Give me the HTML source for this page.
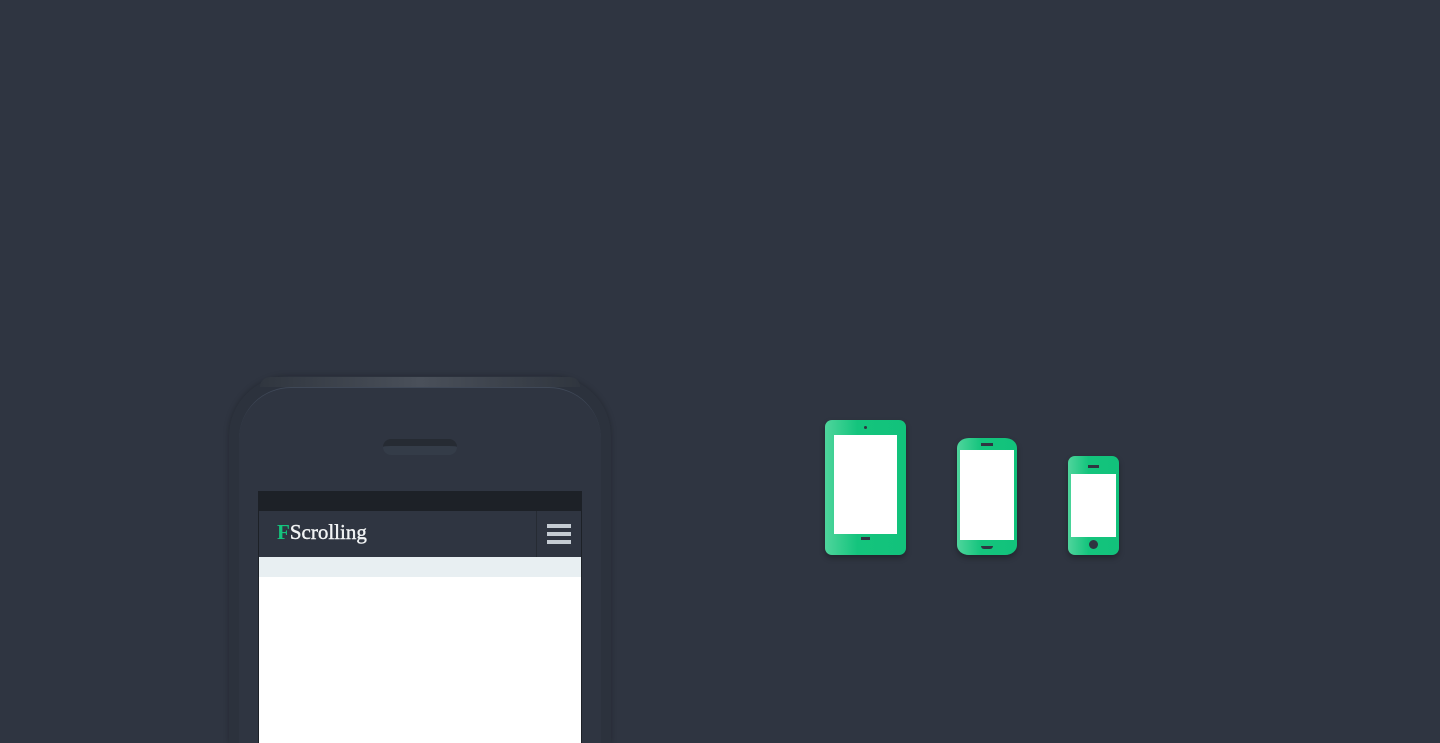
<!DOCTYPE html><html><head><style>
html,body{margin:0;width:1440px;height:743px;overflow:hidden}
body{background:#2f3541;position:relative;font-family:"Liberation Serif",serif}
.a{position:absolute}
.g{background:linear-gradient(90deg,#4fd59c,#14c47d 40%,#12c27b)}
</style></head><body>
<div class="a" style="left:229px;top:376px;width:382px;height:367px;border-radius:60px 60px 0 0;background:#2c323d;box-shadow:0 0 6px rgba(0,0,0,.25)"></div>
<div class="a" style="left:260px;top:377px;width:320px;height:10px;border-radius:40px 40px 0 0;background:linear-gradient(90deg,#30363f,#4a505a 50%,#30363f)"></div>
<div class="a" style="left:239px;top:387px;width:362px;height:356px;border-radius:52px 52px 0 0;background:#2f3541;border-top:1px solid #3f4857"></div>
<div class="a" style="left:383px;top:439px;width:74px;height:16px;border-radius:8px;background:#343c48;border-top:7px solid #262b33;box-sizing:border-box"></div>
<div class="a" style="left:258px;top:491px;width:324px;height:252px;background:#fff;border-left:1px solid #1d2127;border-right:1px solid #1d2127;box-sizing:border-box"></div>
<div class="a" style="left:258px;top:491px;width:324px;height:20px;background:#1d2127"></div>
<div class="a" style="left:259px;top:511px;width:322px;height:46px;background:#2f3541"></div>
<div class="a" style="left:536px;top:511px;width:1px;height:46px;background:#262b33"></div>
<div class="a" style="left:547px;top:524px;width:24px;height:4px;background:#c5ccd3"></div>
<div class="a" style="left:547px;top:532px;width:24px;height:4px;background:#c5ccd3"></div>
<div class="a" style="left:547px;top:540px;width:24px;height:4px;background:#c5ccd3"></div>
<div class="a" style="left:277px;top:519px;font-size:21px;color:#f2f4f5;line-height:26px"><span style="color:#14c47d;font-weight:bold">F</span><span style="-webkit-text-stroke:0.4px #f2f4f5">Scrolling</span></div>
<div class="a" style="left:259px;top:557px;width:322px;height:20px;background:#e8eff2"></div>

<div class="a g" style="left:825px;top:420px;width:81px;height:135px;border-radius:7px;box-shadow:0 3px 6px rgba(0,0,0,.3)"></div>
<div class="a" style="left:834px;top:435px;width:63px;height:99px;background:#fff"></div>
<div class="a" style="left:864px;top:426px;width:3px;height:3px;border-radius:2px;background:#2f3541"></div>
<div class="a" style="left:861px;top:537px;width:9px;height:3px;background:#2f3541"></div>

<div class="a g" style="left:957px;top:438px;width:60px;height:117px;border-radius:12px/10px;box-shadow:0 3px 6px rgba(0,0,0,.3)"></div>
<div class="a" style="left:960px;top:450px;width:54px;height:90px;background:#fff"></div>
<div class="a" style="left:981px;top:443px;width:12px;height:3px;background:#2f3541"></div>
<div class="a" style="left:981px;top:546px;width:12px;height:3px;border-radius:0 0 3px 3px;background:#2f3541"></div>

<div class="a g" style="left:1068px;top:456px;width:51px;height:99px;border-radius:7px;box-shadow:0 3px 6px rgba(0,0,0,.3)"></div>
<div class="a" style="left:1071px;top:474px;width:45px;height:63px;background:#fff"></div>
<div class="a" style="left:1088px;top:465px;width:11px;height:3px;background:#2f3541"></div>
<div class="a" style="left:1089px;top:540px;width:9px;height:9px;border-radius:50%;background:#2f3541"></div>
</body></html>
